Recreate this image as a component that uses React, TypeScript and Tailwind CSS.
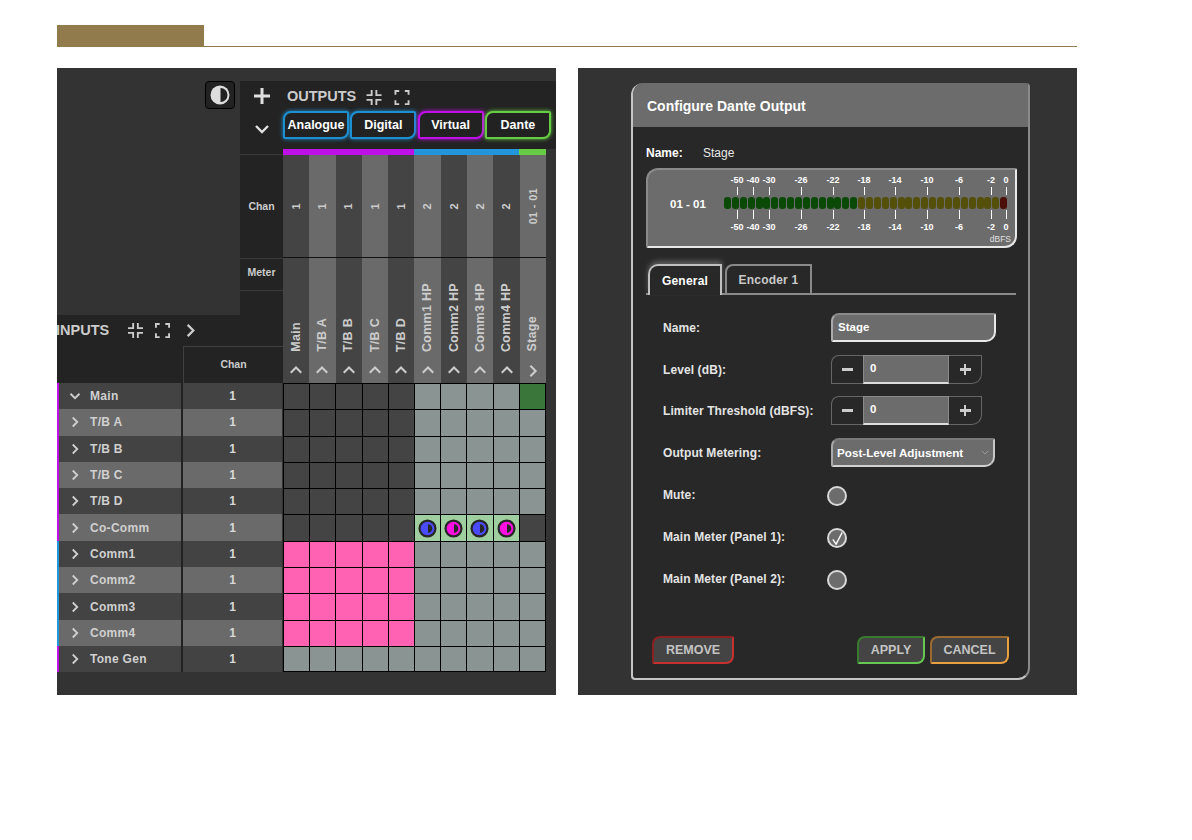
import type { ReactNode } from "react";

const Columnas = [
  { chan: "1", nombre: "Main", flecha: "up" },
  { chan: "1", nombre: "T/B A", flecha: "up" },
  { chan: "1", nombre: "T/B B", flecha: "up" },
  { chan: "1", nombre: "T/B C", flecha: "up" },
  { chan: "1", nombre: "T/B D", flecha: "up" },
  { chan: "2", nombre: "Comm1 HP", flecha: "up" },
  { chan: "2", nombre: "Comm2 HP", flecha: "up" },
  { chan: "2", nombre: "Comm3 HP", flecha: "up" },
  { chan: "2", nombre: "Comm4 HP", flecha: "up" },
  { chan: "01 - 01", nombre: "Stage", flecha: "right" },
];

const D = "bg-[#444444]";
const G = "bg-[#8a9492]";
const P = "bg-[#ff62b2]";
const V = "bg-[#9fcf9f]";
const fila = (a: string, b: string, ultima: string) => [a, a, a, a, a, b, b, b, b, ultima];

const Filas = [
  { nombre: "Main", abierta: true, borde: "bg-[#c010e8]", celdas: fila(D, G, "bg-[#3a763a]") },
  { nombre: "T/B A", borde: "bg-[#c010e8]", celdas: fila(D, G, G) },
  { nombre: "T/B B", borde: "bg-[#c010e8]", celdas: fila(D, G, G) },
  { nombre: "T/B C", borde: "bg-[#c010e8]", celdas: fila(D, G, G) },
  { nombre: "T/B D", borde: "bg-[#c010e8]", celdas: fila(D, G, G) },
  { nombre: "Co-Comm", borde: "bg-[#c010e8]", celdas: fila(D, V, D) },
  { nombre: "Comm1", borde: "bg-[#2296d8]", celdas: fila(P, G, G) },
  { nombre: "Comm2", borde: "bg-[#2296d8]", celdas: fila(P, G, G) },
  { nombre: "Comm3", borde: "bg-[#2296d8]", celdas: fila(P, G, G) },
  { nombre: "Comm4", borde: "bg-[#2296d8]", celdas: fila(P, G, G) },
  { nombre: "Tone Gen", borde: "bg-[#c010e8]", celdas: fila(G, G, G) },
];

const Escala = [
  { t: "-50", x: 89 },
  { t: "-40", x: 105 },
  { t: "-30", x: 121 },
  { t: "-26", x: 153 },
  { t: "-22", x: 185 },
  { t: "-18", x: 216 },
  { t: "-14", x: 247 },
  { t: "-10", x: 279 },
  { t: "-6", x: 311 },
  { t: "-2", x: 343 },
  { t: "0", x: 358 },
];

const Segmentos = Array.from({ length: 36 }).map((_, i) =>
  i < 17 ? "bg-[#0a4a06]" : i < 35 ? "bg-[#54500a]" : "bg-[#4b0e08]"
);

function Chevron({ dir, className }: { dir: "up" | "down" | "right"; className: string }) {
  const d = dir === "up" ? "M2 10 L8 4 L14 10" : dir === "down" ? "M2 5 L8 11 L14 5" : "M5 2 L11 8 L5 14";
  return (
    <svg viewBox="0 0 16 16" className={className} fill="none" stroke="currentColor" strokeWidth="2.4">
      <path d={d} />
    </svg>
  );
}

function Comprimir({ className }: { className: string }) {
  return (
    <svg viewBox="0 0 16 16" className={className} fill="none" stroke="currentColor" strokeWidth="2">
      <path d="M5.5 0 V5.5 H0 M10.5 0 V5.5 H16 M5.5 16 V10.5 H0 M10.5 16 V10.5 H16" />
    </svg>
  );
}

function Expandir({ className }: { className: string }) {
  return (
    <svg viewBox="0 0 16 16" className={className} fill="none" stroke="currentColor" strokeWidth="2">
      <path d="M1 5 V1 H5 M11 1 H15 V5 M1 11 V15 H5 M11 15 H15 V11" />
    </svg>
  );
}

function Punto({ color }: { color: string }) {
  return (
    <svg viewBox="0 0 20 20" className="h-[19px] w-[19px]">
      <circle cx="10" cy="10" r="9.5" fill="#262626" />
      <circle cx="10" cy="10" r="7.2" fill={color} />
      <path d="M10.5 5.5 A4.5 4.5 0 0 1 10.5 14.5 Z" fill="#262626" />
    </svg>
  );
}

function BotonSalida({ children, borde }: { children: ReactNode; borde: string }) {
  return (
    <div className={`flex h-[28px] w-[66px] items-center justify-center rounded-[8px_2px_8px_2px] border-2 bg-[#222222] text-[12.5px] font-bold text-white ${borde}`}>
      {children}
    </div>
  );
}

function Etiqueta({ children, arriba }: { children: ReactNode; arriba?: boolean }) {
  return (
    <span className={`w-[168px] text-[12px] font-bold tracking-[0.1px] text-[#e4e4e4] ${arriba ? "mb-[3px]" : ""}`}>
      {children}
    </span>
  );
}

function Numero() {
  return (
    <div className="flex h-[29px] w-[151px]">
      <div className="flex w-[32px] items-center justify-center rounded-tl-[8px] border border-r-0 border-[#666666] bg-[#282828]">
        <span className="h-[2.5px] w-[11px] bg-[#cccccc]" />
      </div>
      <div className="flex w-[86px] items-center border-x border-b-2 border-t border-[#8a8a8a] border-b-[#dddddd] bg-[#6c6c6c] px-[6px] text-[11.5px] font-bold text-white">
        0
      </div>
      <div className="relative flex w-[33px] items-center justify-center rounded-br-[10px] border border-l-0 border-[#666666] bg-[#282828]">
        <span className="h-[2.5px] w-[11px] bg-[#cccccc]" />
        <span className="absolute h-[11px] w-[2.5px] bg-[#cccccc]" />
      </div>
    </div>
  );
}

function Radio({ marcado }: { marcado?: boolean }) {
  return (
    <div className="-ml-[4px] flex h-[20px] w-[20px] items-center justify-center rounded-full border-2 border-[#d8d8d8] bg-[#6c6c6c]">
      {marcado && (
        <svg viewBox="0 0 16 16" className="h-[15px] w-[15px]" fill="none" stroke="#ffffff" strokeWidth="1.4">
          <path d="M3 9 L6.5 14 L13 1.5" />
        </svg>
      )}
    </div>
  );
}

function BotonAccion({ children, ancho, borde }: { children: ReactNode; ancho: string; borde: string }) {
  return (
    <div className={`flex h-[28px] shrink-0 items-center justify-center rounded-[8px_2px_8px_2px] border-2 bg-[#444444] text-[12.5px] font-bold text-[#c4c4c4] ${ancho} ${borde}`}>
      {children}
    </div>
  );
}

function Medidor() {
  return (
    <div className="relative mt-[8px] h-[80px] w-[371px] rounded-[12px_2px_12px_2px] border-2 border-b-[#e8e8e8] border-l-[#8a8a8a] border-r-[#e8e8e8] border-t-[#8a8a8a] bg-[#6c6c6c]">
      <span className="absolute left-[22px] top-[26px] text-[11.5px] font-bold text-white">01 - 01</span>
      {Escala.map(({ t, x }) => (
        <div key={t}>
          <span className="absolute top-[4px] w-[30px] -translate-x-1/2 text-center text-[9px] font-bold text-white" style={{ left: x }}>{t}</span>
          <span className="absolute top-[17px] h-[8px] w-px bg-white" style={{ left: x }} />
          <span className="absolute top-[40px] h-[9px] w-px bg-white" style={{ left: x }} />
          <span className="absolute top-[51px] w-[30px] -translate-x-1/2 text-center text-[9px] font-bold text-white" style={{ left: x }}>{t}</span>
        </div>
      ))}
      <div className="absolute left-[76px] top-[27px] flex gap-[0.9px]">
        {Segmentos.map((c, i) => (
          <span key={i} className={`h-[12px] w-[7px] rounded-[3px] ${c}`} />
        ))}
      </div>
      <span className="absolute bottom-0 right-[4px] text-[8.5px] text-[#e0e0e0]">dBFS</span>
    </div>
  );
}

function PanelMatriz() {
  return (
    <div className="flex h-[627px] w-[499px] flex-col bg-[#333333] pt-[13px]">
      <div className="flex h-[302px]">
        <div className="flex w-[226px] flex-col">
          <div className="flex h-[234px]">
            <div className="flex w-[183px] justify-end pr-[5px]">
              <div className="flex h-[28px] w-[30px] items-center justify-center rounded-[4px] border border-black bg-[#222222]">
                <svg viewBox="0 0 20 20" className="h-[20px] w-[20px]">
                  <circle cx="10" cy="10" r="9.5" fill="#dddddd" />
                  <path d="M10.5 3 A7 7 0 0 1 10.5 17 Z" fill="#222222" />
                </svg>
              </div>
            </div>
            <div className="flex w-[43px] flex-col bg-[#232323] text-[#cccccc]">
              <div className="flex h-[74px] flex-col items-center gap-[17px] border-b border-[#3a3a3a] pt-[7px] text-[#e0e0e0]">
                <svg viewBox="0 0 16 16" className="h-[16px] w-[16px]" fill="none" stroke="currentColor" strokeWidth="3">
                  <path d="M8 0 V16 M0 8 H16" />
                </svg>
                <Chevron dir="down" className="h-[16px] w-[16px]" />
              </div>
              <div className="flex h-[103px] items-center justify-center text-[10.5px] font-bold">Chan</div>
              <div className="flex h-[33px] items-center justify-center border-b border-t border-[#3a3a3a] pb-[4px] text-[10.5px] font-bold">Meter</div>
            </div>
          </div>
          <div className="flex flex-1 flex-col overflow-hidden bg-[#232323]">
            <div className="flex h-[31px] items-center text-[#cccccc]">
              <span className="ml-[-1px] text-[14.5px] font-bold">INPUTS</span>
              <Comprimir className="ml-[19px] h-[15px] w-[15px]" />
              <Expandir className="ml-[12px] h-[15px] w-[15px]" />
              <Chevron dir="right" className="ml-[13px] h-[15px] w-[15px]" />
            </div>
            <div className="ml-[126px] flex flex-1 items-center justify-center border-l border-t border-[#3f3f3f] text-[10.5px] font-bold text-[#cccccc]">
              Chan
            </div>
          </div>
        </div>
        <div className="flex w-[273px] flex-col">
          <div className="flex h-[68px] flex-col bg-[#232323] pl-[4px] pt-[8px]">
            <div className="flex h-[16px] items-center text-[#cccccc]">
              <span className="text-[14.5px] font-bold">OUTPUTS</span>
              <Comprimir className="ml-[10px] h-[15px] w-[16px]" />
              <Expandir className="ml-[12px] h-[15px] w-[16px]" />
            </div>
            <div className="-ml-[4px] mt-[6px] flex gap-[1.3px]">
              <BotonSalida borde="border-[#1e8fd0] shadow-[0_0_4px_#1e8fd0]">Analogue</BotonSalida>
              <BotonSalida borde="border-[#1e8fd0] shadow-[0_0_4px_#1e8fd0]">Digital</BotonSalida>
              <BotonSalida borde="border-[#c010e8] shadow-[0_0_4px_#c010e8]">Virtual</BotonSalida>
              <BotonSalida borde="border-[#66cc44] shadow-[0_0_4px_#66cc44]">Dante</BotonSalida>
            </div>
          </div>
          <div className="flex h-[6px] w-[263px]">
            <span className="w-[131px] bg-[#c010e8]" />
            <span className="w-[105px] bg-[#2296d8]" />
            <span className="w-[27px] bg-[#66cc44]" />
          </div>
          <div className="flex w-[263px] flex-1">
            {Columnas.map((c, i) => (
              <div key={c.nombre} className={`flex flex-1 flex-col text-[#cccccc] ${i % 2 === 0 ? "bg-[#444444]" : "bg-[#6a6a6a]"}`}>
                <div className="flex h-[103px] items-center justify-center border-b border-[#111111]">
                  <span className="rotate-180 text-[11px] font-bold tracking-[0.3px] [writing-mode:vertical-rl]">{c.chan}</span>
                </div>
                <div className="flex flex-1 flex-col items-center justify-end pb-[5px]">
                  <span className="rotate-180 text-[12.5px] font-bold tracking-[0.3px] whitespace-nowrap [writing-mode:vertical-rl]">{c.nombre}</span>
                  <Chevron dir={c.flecha as "up" | "right"} className="mt-[12px] h-[14px] w-[14px]" />
                </div>
              </div>
            ))}
          </div>
        </div>
      </div>
      <div className="flex flex-col">
        {Filas.map((f, i) => (
          <div key={f.nombre} className="flex h-[26.3px]">
            <span className={`w-[2px] ${f.borde}`} />
            <div className={`flex w-[124px] items-center border-r-2 border-[#222222] pl-[10px] text-[#d0d0d0] ${i % 2 === 0 ? "bg-[#434343]" : "bg-[#6a6a6a]"}`}>
              <Chevron dir={f.abierta ? "down" : "right"} className="h-[12px] w-[12px]" />
              <span className="ml-[9px] text-[12px] font-bold tracking-[0.3px]">{f.nombre}</span>
            </div>
            <div className={`flex w-[99px] items-center justify-center text-[12px] font-bold text-[#d8d8d8] ${i % 2 === 0 ? "bg-[#434343]" : "bg-[#6a6a6a]"}`}>
              1
            </div>
            <div className={`ml-px grid w-[263px] grid-cols-10 gap-px border-l border-t border-black bg-black pr-px ${i === 10 ? "border-b" : ""}`}>
              {f.celdas.map((c, j) => (
                <div key={j} className={`flex items-center justify-center ${c}`}>
                  {c === V && <Punto color={j % 2 === 1 ? "#4a4aff" : "#ff10e0"} />}
                </div>
              ))}
            </div>
          </div>
        ))}
      </div>
    </div>
  );
}

function Dialogo() {
  return (
    <div className="flex h-[597px] w-[399px] flex-col overflow-hidden rounded-[12px_4px_12px_4px] border-b-2 border-l-2 border-r-2 border-[#c4c4c4] border-r-[#8a8a8a] bg-[#282828]">
      <div className="flex h-[44px] items-center bg-[#6c6c6c] pl-[14px] pt-[3px] text-[14px] font-bold text-white">
        Configure Dante Output
      </div>
      <div className="flex flex-1 flex-col px-[13px] pt-[19px]">
        <div className="flex h-[14px] items-center text-[12px] text-[#e8e8e8]">
          <span className="w-[57px] font-bold text-white">Name:</span>
          <span>Stage</span>
        </div>
        <Medidor />
        <div className="mt-[16px] flex h-[31px] w-[370px] items-end border-b-2 border-[#8a8a8a] pl-[2px]">
          <div className="-mb-[2px] flex h-[31px] w-[74px] items-center justify-center rounded-tl-[10px] border-x-2 border-t-2 border-[#c0c0c0] bg-[#282828] text-[12px] font-bold tracking-[0.2px] text-white shadow-[0_-3px_5px_rgba(255,255,255,0.25)]">
            General
          </div>
          <div className="ml-[3px] flex h-[29px] w-[87px] items-center justify-center rounded-tl-[8px] border-x-2 border-t-2 border-[#8a8a8a] text-[12px] font-bold tracking-[0.2px] text-[#c8c8c8]">
            Encoder 1
          </div>
        </div>
        <div className="flex flex-col pl-[17px] pt-[18px]">
          <div className="flex h-[29px] items-center">
            <Etiqueta>Name:</Etiqueta>
            <div className="flex h-[29px] w-[165px] items-center rounded-[8px_2px_10px_2px] border-2 border-b-[#e8e8e8] border-l-[#aaaaaa] border-r-[#e8e8e8] border-t-[#8a8a8a] bg-[#6c6c6c] pl-[5px] text-[11.5px] font-bold text-white">
              Stage
            </div>
          </div>
          <div className="mt-[13px] flex h-[29px] items-center">
            <Etiqueta>Level (dB):</Etiqueta>
            <Numero />
          </div>
          <div className="mt-[12px] flex h-[29px] items-center">
            <Etiqueta>Limiter Threshold (dBFS):</Etiqueta>
            <Numero />
          </div>
          <div className="mt-[13px] flex h-[29px] items-center">
            <Etiqueta>Output Metering:</Etiqueta>
            <div className="flex h-[29px] w-[164px] items-center justify-between rounded-[8px_2px_10px_2px] border-2 border-b-[#d0d0d0] border-l-[#aaaaaa] border-r-[#c8c8c8] border-t-[#7a7a7a] bg-[#6c6c6c] px-[4px] text-[11.7px] font-bold text-white">
              Post-Level Adjustment
              <svg viewBox="0 0 10 6" className="h-[5px] w-[8px]" fill="none" stroke="#a8a8a8" strokeWidth="1">
                <path d="M1 1 L5 5 L9 1" />
              </svg>
            </div>
          </div>
          <div className="mt-[19px] flex h-[20px] items-center">
            <Etiqueta arriba>Mute:</Etiqueta>
            <Radio />
          </div>
          <div className="mt-[22px] flex h-[20px] items-center">
            <Etiqueta arriba>Main Meter (Panel 1):</Etiqueta>
            <Radio marcado />
          </div>
          <div className="mt-[22px] flex h-[20px] items-center">
            <Etiqueta arriba>Main Meter (Panel 2):</Etiqueta>
            <Radio />
          </div>
        </div>
        <div className="mt-[46px] flex gap-[5px] pl-[6px]">
          <BotonAccion ancho="w-[82px]" borde="border-[#8a2020] border-b-[#c83030] border-r-[#c83030]">REMOVE</BotonAccion>
          <BotonAccion ancho="ml-[118px] w-[68px]" borde="border-[#3a7a30] border-b-[#66c850] border-r-[#66c850]">APPLY</BotonAccion>
          <BotonAccion ancho="w-[79px]" borde="border-[#9a6a30] border-b-[#e8a040] border-r-[#e8a040]">CANCEL</BotonAccion>
        </div>
      </div>
    </div>
  );
}

export default function App() {
  return (
    <div className="h-[840px] w-[1192px] bg-white pl-[57px] pt-[25px] [font-family:'Liberation_Sans',Arial,sans-serif]">
      <div className="flex h-[21.5px] w-[1020px] items-end">
        <div className="h-[21.5px] w-[147px] bg-[#917b4d]" />
        <div className="h-px flex-1 bg-[#917b4d]" />
      </div>
      <div className="mt-[21.5px] flex gap-[22px]">
        <PanelMatriz />
        <div className="h-[627px] w-[499px] bg-[#333333] pl-[53px] pt-[15px]">
          <Dialogo />
        </div>
      </div>
    </div>
  );
}
